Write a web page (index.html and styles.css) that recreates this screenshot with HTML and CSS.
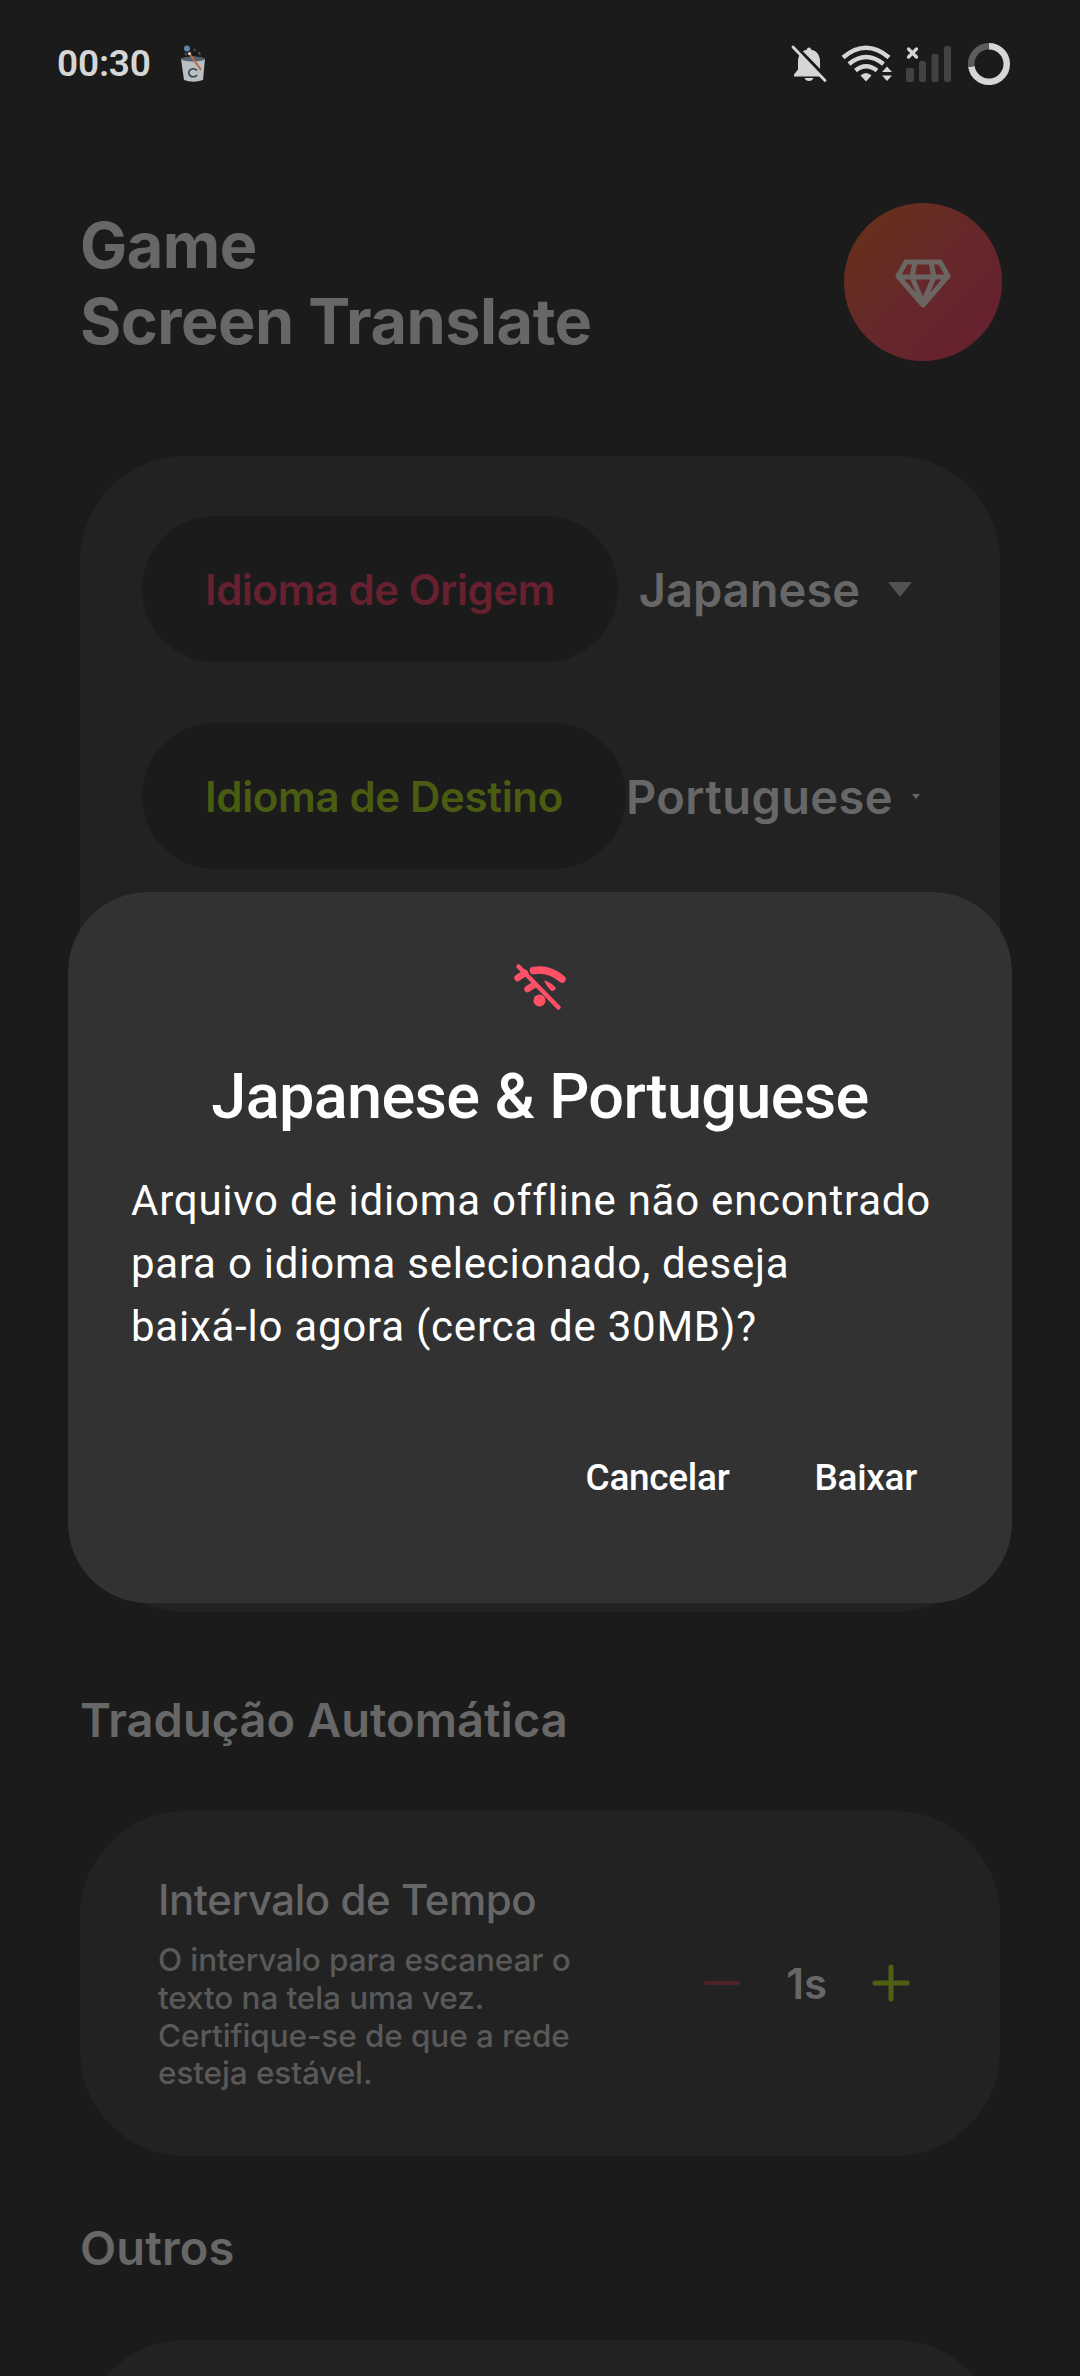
FILE: index.html
```html
<!DOCTYPE html>
<html lang="pt">
<head>
<meta charset="utf-8">
<title>Game Screen Translate</title>
<link rel="stylesheet" href="styles.css">
</head>
<body>
<div class="screen">
  <div class="status">
    <div class="status-left">
      <span class="clock">00:30</span>
      <svg class="bucket" width="26" height="40" viewBox="0 0 26 40">
        <path d="M1 15Q13 10 25 15L23 36Q13 39.500 4 36Z" fill="#b9c0c4"/>
        <ellipse cx="13" cy="15" rx="12" ry="2.400" fill="#55616f"/>
        <path d="M5 9l2 2M14 5l1 2M19 8l1 3" stroke="#4b5058" stroke-width="2"/>
        <circle cx="7" cy="4.500" r="3" fill="#6683ad"/>
        <path d="M9 9L21 26" stroke="#b9683f" stroke-width="2"/>
        <circle cx="9.500" cy="9.500" r="1.500" fill="#e2d6cf"/>
        <path d="M17 26.500a4.500 4 0 1 0 0 4.500" fill="none" stroke="#3c4145" stroke-width="1.600"/>
      </svg>
    </div>
    <div class="status-right">
      <svg width="36" height="38" viewBox="0 0 36 38">
        <path d="M18 2.500c1.400 0 1.800.8 2 2 6 1.300 9 6 9 12v8l4 5v2H3v-2l4-5v-8c0-6 3-10.700 9-12 .2-1.200.6-2 2-2zM13.500 33h9c-.7 2-2.400 3-4.500 3s-3.800-1-4.500-3z" fill="#d6d6d6"/>
        <path d="M3 0L37 35" stroke="#1b1b1b" stroke-width="4"/>
        <path d="M2 2L34 35.500" stroke="#d6d6d6" stroke-width="2.800" stroke-linecap="round"/>
      </svg>
      <svg class="wifi" width="52" height="38" viewBox="0 0 52 38">
        <g fill="none" stroke="#d6d6d6" stroke-width="4.400">
          <path d="M2 12.500Q25 -7 48 12.500"/><path d="M8 19Q25 5 42.500 19"/><path d="M14.500 25.500Q25 17 36 25.500"/>
        </g>
        <path d="M25 36.500l-5.500-6q5.500-5 11 0zM46 21.500l5 5.500H41zM46 36l-5-5.500h10z" fill="#d6d6d6"/>
      </svg>
      <svg class="signal" width="46" height="38" viewBox="0 0 46 38">
        <g fill="#424242"><rect y="23" width="8" height="14" rx="2"/><rect x="13" y="16" width="7" height="21" rx="2"/><rect x="25.500" y="9" width="7" height="28" rx="2"/><rect x="38" y="1" width="7" height="36" rx="2"/></g>
        <path d="M2.500 4l8 8M10.500 4l-8 8" stroke="#d6d6d6" stroke-width="3.200" stroke-linecap="round"/>
      </svg>
      <svg class="ring" width="42" height="42" viewBox="0 0 42 42" fill="none" stroke-width="6.500">
        <path d="M21 3.250A17.750 17.750 0 1 1 3.400 23.500" stroke="#d6d6d6"/>
        <path d="M3.400 23.500A17.750 17.750 0 0 1 21 3.250" stroke="#5c5c5c"/>
      </svg>
    </div>
  </div>

  <header class="header">
    <h1 class="app-title">Game<br>Screen Translate</h1>
    <div class="premium">
      <svg width="56" height="50" viewBox="0 0 56 50" fill="none" stroke="#6b6661" stroke-width="5" stroke-linejoin="round">
        <path d="M11 3H45L53 17L28 46L3 17ZM3 18H53M20 3L17 18L28 44L39 18L36 3"/>
      </svg>
    </div>
  </header>

  <section class="card languages">
    <div class="row">
      <div class="pill source">Idioma de Origem</div>
      <div class="select select-source">Japanese<svg width="24" height="15" viewBox="0 0 24 15"><path d="M0 0H24L12 15Z" fill="#525252"/></svg></div>
    </div>
    <div class="row">
      <div class="pill target">Idioma de Destino</div>
      <div class="select select-target">Portuguese<svg width="8" height="5" viewBox="0 0 24 15"><path d="M0 0H24L12 15Z" fill="#666"/></svg></div>
    </div>
  </section>

  <h2 class="section-title">Tradução Automática</h2>
  <section class="card interval">
    <div class="interval-text">
      <div class="interval-title">Intervalo de Tempo</div>
      <p class="interval-desc">O intervalo para escanear o<br>texto na tela uma vez.<br>Certifique-se de que a rede<br>esteja estável.</p>
    </div>
    <div class="stepper">
      <svg width="38" height="38" viewBox="0 0 38 38"><path d="M3 19H35" stroke="#4d2228" stroke-width="4" stroke-linecap="round"/></svg>
      <span class="value">1s</span>
      <svg width="38" height="38" viewBox="0 0 38 38"><path d="M3 19H35M19 3V35" stroke="#506013" stroke-width="5" stroke-linecap="round"/></svg>
    </div>
  </section>

  <h2 class="section-title others">Outros</h2>
  <section class="card rest"></section>

  <div class="dialog">
    <svg class="offline" width="54" height="48" viewBox="0 0 54 48" fill="none" stroke="#ff5068" stroke-linecap="round">
      <path d="M20.500 7.500Q36 5 49 16" stroke-width="7.500"/>
      <path d="M4.500 15L12 10M14.500 26L21 22" stroke-width="6.500"/>
      <path d="M31 17.500Q38 19 43 25Q42 28 39 28Q35 26 31 17.500Z" fill="#ff5068" stroke="none"/>
      <circle cx="26.500" cy="37.500" r="6" fill="#ff5068" stroke="none"/>
      <path d="M5.500 3.500L45.500 44.500" stroke-width="4.500"/>
    </svg>
    <h3 class="dialog-title">Japanese &amp; Portuguese</h3>
    <p class="dialog-text">Arquivo de idioma offline não encontrado<br>para o idioma selecionado, deseja<br>baixá-lo agora (cerca de 30MB)?</p>
    <div class="actions"><span>Cancelar</span><span>Baixar</span></div>
  </div>
</div>
</body>
</html>
```
FILE: styles.css
```css
* { box-sizing: border-box; margin: 0; padding: 0; }
body { background: #1b1b1b; font-family: Inter, "Liberation Sans", sans-serif; color: #676767; }
svg { display: block; flex: none; }
.screen { position: relative; width: 1080px; height: 2376px; overflow: hidden; display: flex; flex-direction: column; }

.status { flex: none; height: 127px; padding: 0 70px 0 57px; display: flex; justify-content: space-between; align-items: center; }
.status-left, .status-right { display: flex; align-items: center; }
.clock { font: 600 37px/44px Roboto, sans-serif; letter-spacing: -0.2px; color: #d6d6d6; }
.bucket { margin-left: 29px; }
.wifi { margin-left: 14px; }
.signal { margin-left: 13px; }
.ring { margin-left: 16px; }

.header { flex: none; height: 158px; margin-top: 76px; padding: 0 78px 0 80px; display: flex; align-items: center; justify-content: space-between; }
.app-title { padding-top: 2px; font-size: 63px; line-height: 76px; font-weight: 700; letter-spacing: -0.5px; }
.premium { width: 158px; height: 158px; padding-top: 3px; border-radius: 50%; background: linear-gradient(135deg, #662f1c 15%, #66282a 50%, #66222e 85%); display: flex; align-items: center; justify-content: center; }

.card { flex: none; margin: 0 80px; background: #222; border-radius: 105px; }
.languages { height: 1156px; margin-top: 95px; padding: 60px 62px; display: flex; flex-direction: column; gap: 61px; }
.row { height: 146px; display: flex; align-items: center; }
.pill { height: 146px; padding: 0 63px; border-radius: 73px; background: #1b1b1b; display: flex; align-items: center; font-size: 42px; font-weight: 600; letter-spacing: -0.5px; white-space: nowrap; }
.source { color: #66202e; }
.target { color: #495c12; letter-spacing: -0.35px; }
.select { padding-top: 1px; display: flex; align-items: center; font-size: 47px; font-weight: 600; white-space: nowrap; }
.select-source { padding-left: 21px; gap: 28px; }
.select-target { gap: 19px; letter-spacing: 0.4px; }

.section-title { flex: none; margin: 79px 80px 0; font-size: 47px; line-height: 57px; font-weight: 600; }
.interval { height: 345px; margin-top: 63px; padding: 62px 90px 63px 78px; display: flex; justify-content: space-between; align-items: center; }
.interval-title { font-size: 42px; line-height: 51px; font-weight: 500; letter-spacing: -0.45px; }
.interval-desc { margin-top: 16px; font-size: 31.5px; line-height: 37.8px; font-weight: 500; letter-spacing: -0.1px; color: #595959; }
.stepper { display: flex; align-items: center; gap: 45px; }
.value { font-size: 42px; line-height: 51px; font-weight: 600; }
.others { margin-top: 63px; letter-spacing: 0.15px; }
.rest { height: 345px; margin-top: 64px; }

.dialog { position: absolute; left: 68px; top: 892px; width: 944px; height: 711px; padding: 71px 63px 0; border-radius: 80px; background: #323232; color: #fff; font-family: Roboto, sans-serif; display: flex; flex-direction: column; }
.offline { align-self: center; }
.dialog-title { margin-top: 48px; text-align: center; font-size: 63px; line-height: 76px; font-weight: 500; letter-spacing: -0.65px; }
.dialog-text { margin-top: 34px; font-size: 42px; line-height: 63px; letter-spacing: 0.76px; white-space: nowrap; }
.actions { display: flex; justify-content: flex-end; gap: 85px; margin-top: 98px; padding-right: 32px; font-size: 37px; line-height: 44px; font-weight: 500; letter-spacing: -0.3px; }
```
